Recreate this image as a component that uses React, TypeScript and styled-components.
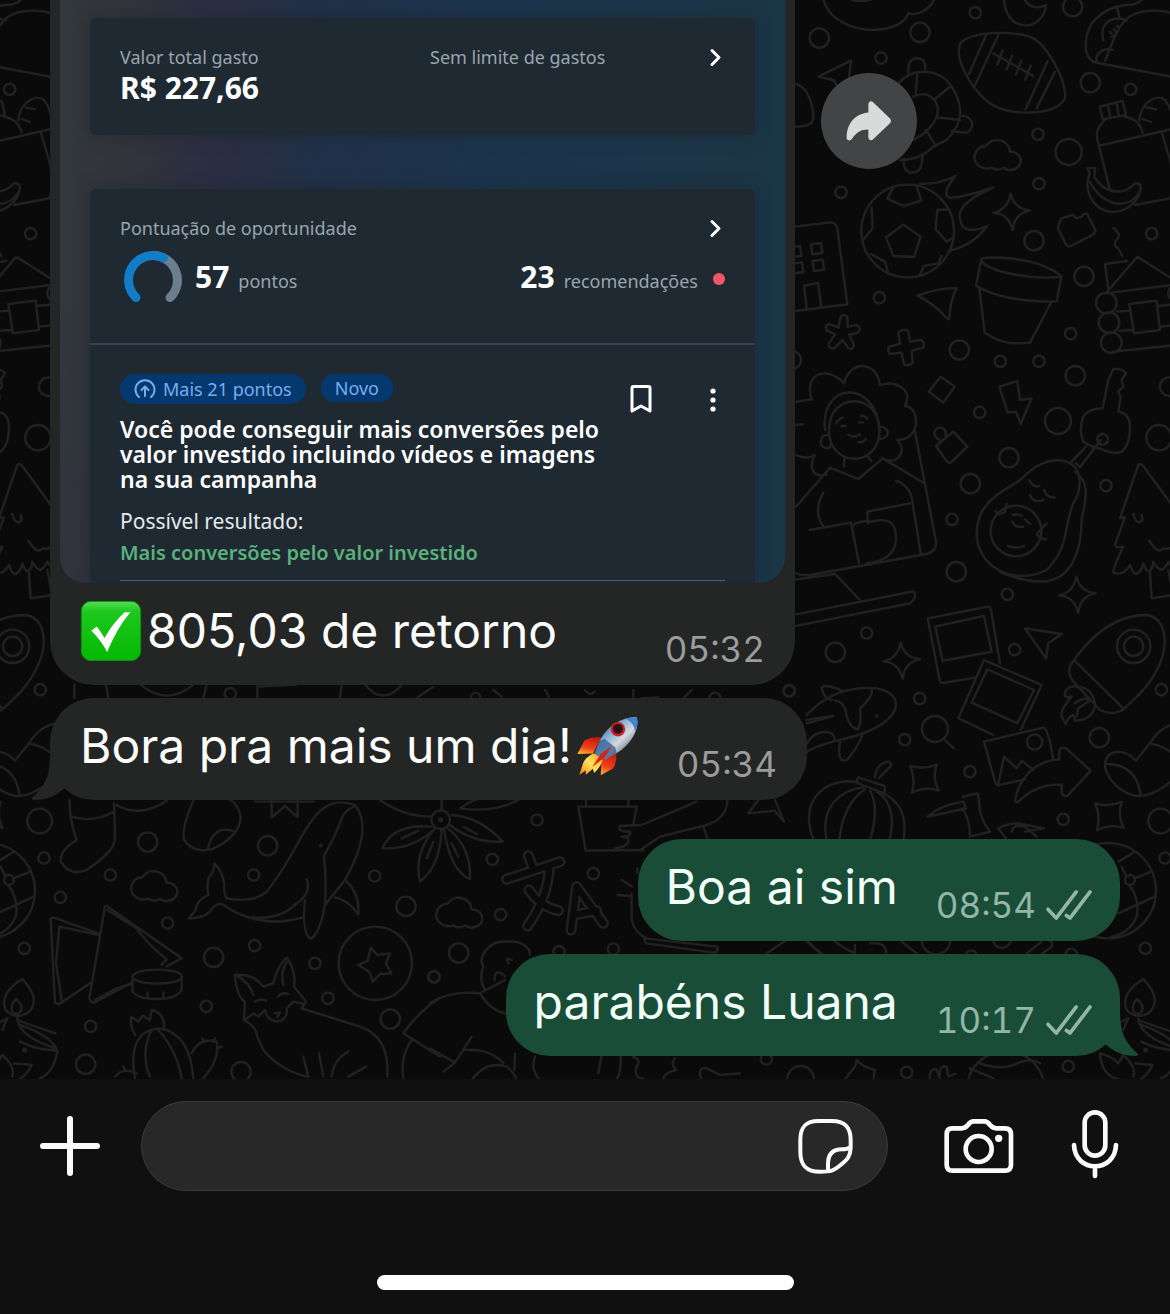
import { ReactNode } from "react";
import styled, { createGlobalStyle } from "styled-components";

const GlobalStyle = createGlobalStyle`
  *, *::before, *::after {
    box-sizing: border-box;
  }
  body {
    margin: 0;
    background-color: #101010;
    font-family: Inter, "Liberation Sans", sans-serif;
  }
  p, h2 {
    margin: 0;
  }
  button {
    padding: 0;
    border: 0;
    background: none;
    color: inherit;
    cursor: pointer;
  }
  svg {
    display: block;
    flex-shrink: 0;
  }
`;

const Screen = styled.div`
  display: flex;
  flex-direction: column;
  min-height: 100vh;
`;

/* chat */
const Chat = styled.main`
  position: relative;
  flex: 1;
  display: flex;
  flex-direction: column;
  justify-content: flex-end;
  gap: 13px;
  padding: 0 50px 23px;
  overflow: hidden;
  background-color: #0a0a0a;
`;
const WallpaperSvg = styled.svg`
  position: absolute;
  inset: 0;
  width: 100%;
  height: 100%;
`;
const MessageRow = styled.div<{ $mine?: boolean; $spaced?: boolean }>`
  position: relative;
  display: flex;
  align-items: flex-start;
  justify-content: ${({ $mine }) => ($mine ? "flex-end" : "flex-start")};
  gap: 26px;
  margin-top: ${({ $spaced }) => ($spaced ? "26px" : "0")};
`;
const Bubble = styled.div<{ $mine?: boolean }>`
  position: relative;
  border-radius: 44px;
  background-color: ${({ $mine }) => ($mine ? "#194d38" : "#242625")};
  color: ${({ $mine }) => ($mine ? "#f1fff8" : "#fdfdfd")};
`;
const PhotoBubble = styled(Bubble)`
  flex: 0 1 745px;
  border-radius: 0 0 44px 44px;
`;
const MessageBody = styled.div<{ $mine?: boolean }>`
  display: flex;
  align-items: flex-end;
  justify-content: space-between;
  gap: 38px;
  padding: ${({ $mine }) => ($mine ? "18px 28px 14px" : "18px 30px 14px")};
`;
const MessageText = styled.p`
  display: flex;
  align-items: center;
  gap: 5px;
  padding-bottom: 10px;
  font-size: 48px;
  line-height: 60px;

  & svg {
    height: 60px;
  }
`;
const MessageMeta = styled.div<{ $mine?: boolean }>`
  display: flex;
  align-items: center;
  gap: 10px;
  color: ${({ $mine }) => ($mine ? "#93b6a7" : "#9b9c9c")};
  font-size: 35px;
  line-height: 44px;
  font-variant-numeric: tabular-nums;
`;
const TailSvg = styled.svg<{ $mine?: boolean }>`
  position: absolute;
  bottom: 0;
  width: 50px;
  height: 60px;
  ${({ $mine }) => ($mine ? "right: -18px;" : "left: -18px; transform: scaleX(-1);")}
  fill: ${({ $mine }) => ($mine ? "#194d38" : "#242625")};
`;
const ForwardButton = styled.button`
  flex-shrink: 0;
  display: flex;
  align-items: center;
  justify-content: center;
  width: 96px;
  height: 96px;
  margin-top: 73px;
  border-radius: 50%;
  background-color: #434445;
`;

/* shared photo */
const Photo = styled.div`
  margin: 0 10px;
  padding: 18px 30px 0;
  border-radius: 0 0 26px 26px;
  background:
    linear-gradient(180deg, transparent 50%, rgba(46, 46, 66, 0.5) 100%) left / 60px 100% no-repeat,
    linear-gradient(90deg, #33383a 0, #32333c 70px, #2b2e42 150px, #203048 260px, #1b344c 420px, #1c3548 640px, #1b3646 100%);
  font-family: "Noto Sans", "Open Sans", sans-serif;
  overflow: hidden;
`;
const Card = styled.section`
  background-color: #1e2932;
  box-shadow: 0 0 16px rgba(28, 38, 46, 0.6);
`;
const SpendCard = styled(Card)`
  display: grid;
  grid-template-columns: 310px 1fr auto;
  padding: 27px 30px 28px;
  margin-bottom: 54px;
  border-radius: 6px;
`;
const ScoreCard = styled(Card)`
  border-radius: 6px 6px 0 0;
`;
const Label = styled.p`
  color: #9aa5ad;
  font-size: 18px;
  line-height: 24px;
`;
const Amount = styled.p`
  color: #fff;
  font-size: 30px;
  font-weight: 700;
  line-height: 38px;
`;
const ChevronButton = styled.button`
  height: 24px;
`;
const ScoreTop = styled.div`
  padding: 27px 30px 34px;
  border-bottom: 2px solid #334351;
`;
const ScoreHeader = styled.div`
  display: flex;
  justify-content: space-between;
  margin-bottom: 9px;
`;
const ScoreRow = styled.div`
  display: flex;
  align-items: center;
  height: 60px;
`;
const Figure = styled.p`
  display: flex;
  align-items: baseline;
  gap: 9px;
  margin-left: 9px;
  color: #9aa5ad;
  font-size: 18px;
  line-height: 40px;

  &:last-of-type {
    margin-left: auto;
  }
  & strong {
    color: #fff;
    font-size: 30px;
    font-weight: 700;
  }
`;
const RedDot = styled.span`
  width: 12px;
  height: 12px;
  margin-left: 15px;
  border-radius: 50%;
  background-color: #f25767;
`;
const Recommendation = styled.div`
  display: flex;
  justify-content: space-between;
  margin: 0 30px;
  padding: 29px 0 12px;
  border-bottom: 1px solid #50606d;
`;
const PhotoEnd = styled.div`
  height: 2px;
`;
const TagList = styled.div`
  display: flex;
  align-items: flex-start;
  gap: 15px;
  margin-bottom: 13px;
`;
const Tag = styled.span<{ $small?: boolean }>`
  display: flex;
  align-items: center;
  gap: 7px;
  height: ${({ $small }) => ($small ? "28px" : "30px")};
  padding: 0 14px;
  border-radius: 15px;
  background-color: #05386f;
  color: #75aeee;
  font-size: 18px;
`;
const Title = styled.h2`
  max-width: 495px;
  color: #fff;
  font-size: 23px;
  font-weight: 600;
  line-height: 25px;
`;
const Result = styled.p`
  margin-top: 14px;
  color: #e4e9ec;
  font-size: 21px;
  line-height: 31px;

  & strong {
    display: block;
    color: #5bb07b;
    font-size: 20px;
    font-weight: 600;
  }
`;
const CardActions = styled.div`
  display: flex;
  align-items: flex-start;
  gap: 48px;
  padding-top: 10px;
  color: #fff;
`;

/* composer */
const Composer = styled.footer`
  padding: 22px 0 24px;
  background-color: #101010;
  color: #fafafa;
`;
const ComposerBar = styled.form`
  display: flex;
  align-items: center;
  padding: 0 51px 0 40px;
`;
const InputBox = styled.div`
  flex: 1;
  display: flex;
  align-items: center;
  min-width: 0;
  height: 90px;
  margin: 0 56px 0 41px;
  padding: 0 34px 0 40px;
  border: 1px solid #3a3a3a;
  border-radius: 45px;
  background-color: #282828;
`;
const TextInput = styled.input`
  flex: 1;
  min-width: 0;
  border: 0;
  outline: 0;
  background: none;
  color: #fff;
  font: inherit;
  font-size: 48px;
`;
const ActionGroup = styled.div`
  display: flex;
  align-items: center;
  gap: 57px;
`;
const HomeIndicator = styled.div`
  width: 417px;
  max-width: 60%;
  height: 15px;
  margin: 84px auto 0;
  border-radius: 8px;
  background-color: #fff;
`;

type DoodlePatch = {
  x: number;
  y: number;
  circles: number[][];
  paths: string[];
};

const sparkle = (x: number, y: number) =>
  `M${x} ${y - 55} q10 43 58 50 q-46 8 -52 58 q-13 -50 -58 -52 q43 -8 52 -56z`;
const squareSparkle = (x: number, y: number) =>
  `M${x - 40} ${y - 40} q38 12 80 -4 q-13 38 6 78 q-38 -14 -80 6 q12 -42 -6 -80z`;
const cloud = (x: number, y: number) =>
  `M${x - 53} ${y + 35} c-30 -20 -15 -60 18 -62 c17 -28 67 -23 72 17 c40 0 45 50 2 55 q-12 2 -20 -7 q-22 12 -37 0 q-20 7 -35 -3z`;

// each patch is drawn at a third of its size, with its corner at x, y
const patches: DoodlePatch[] = [
  {
    x: 780,
    y: 0,
    circles: [
      [118, 114, 29], [303, 174, 17], [420, 97, 29], [586, 38, 17], [878, 20, 29], [931, 248, 29], [1052, 268, 17],
      [774, 403, 17], [866, 456, 39], [777, 551, 17], [183, 577, 17], [298, 893, 17], [762, 722, 29], [912, 829, 29],
      [1115, 701, 17], [538, 1050, 29], [661, 1084, 17], [777, 1084, 17], [872, 1001, 17], [886, 1127, 29],
      [35, 1080, 28], [383, 693, 139], [979, 909, 31], [987, 968, 31], [994, 1028, 31], [1190, 880, 25],
    ],
    paths: [
      "M128 -10C150 110 360 115 385 40C420 50 450 25 465 -5M205 -4Q240 10 280 -4",
      "M672 -10C670 100 790 100 798 15C770 30 740 20 730 -10",
      "M945 187C900 170 915 80 950 55Q985 20 1040 15Q1075 15 1090 -5M975 183C1010 100 1020 30 1120 32C1160 32 1190 40 1210 60M945 187L1185 232M1012 25L1018 50M970 120C955 60 1010 45 1040 62M950 182C945 160 975 140 998 150M990 95l4 6M1002 88l4 6M995 110l12 -4M1012 78l4 6",
      "M540 130C580 90 700 95 750 110C800 130 860 240 855 295C830 345 720 345 660 325C590 300 530 190 537 150ZM617 108L567 222M655 105L583 260M803 183L737 328M825 215L770 325M640 160L760 228M668 152l-16 42M696 167l-16 42M724 182l-16 42M752 197l-16 42",
      "M385 222L386 195C392 168 430 168 436 195L434 215M355 250C400 200 480 205 515 260C560 330 540 380 500 420L460 440Q420 480 360 480M400 290C450 265 485 310 470 350C455 390 420 410 400 420M412 222L407 280M508 262L465 297M472 352L540 360M437 390L463 430M540 348C575 345 590 380 560 398L515 394M372 475C368 510 385 520 398 518C425 515 425 495 428 470",
      "M170 255L160 240L115 230L213 182L207 235",
      "M46 252C80 255 100 310 100 355Q98 380 46 380",
      cloud(653, 465),
      "M370 674L422 710L402 771L340 768L318 712ZM340 562L322 596L372 618L424 602L410 560M275 622L278 685L250 720M505 628L472 630L467 688L500 725L518 715M273 762L315 785L325 822M485 768L475 790L432 798L418 828",
      "M420 552Q490 550 527 527Q480 585 510 593Q540 595 640 563Q530 610 540 655Q545 710 622 678Q580 735 510 752",
      sparkle(692, 637),
      "M840 665L845 655L880 645L888 655L905 650Q910 638 922 642L946 690Q946 700 938 705L872 738Q862 740 856 730L834 685Q834 675 840 665Z",
      "M1000 684Q1025 705 1013 715Q995 735 1015 745L1027 768",
      "M960 320L1028 303L1038 345L968 358ZM985 318l6 36M1010 308l6 38M975 358L958 380Q945 400 955 430L990 570M1035 350Q1080 360 1088 398M958 437L1185 385M1145 395L1170 480Q1190 560 1170 595L1065 615M1078 362C1080 310 1130 280 1155 300C1180 330 1180 370 1180 385M1100 322L1128 328M1088 357L1113 366",
      "M922 505L945 503L943 530C970 580 1030 590 1065 550Q1080 548 1083 560C1080 610 1030 640 990 635C930 625 910 560 930 520ZM930 545C960 610 1040 640 1080 575",
      "M46 680L150 667Q168 667 172 685L202 913L46 933M93 733l30 -4l4 30l-30 4zM98 783l30 -4l4 30l-30 4zM46 740l14 -2l4 30l-18 2M46 790l20 -2l4 28l-22 3M80 925L72 857L114 849L124 920",
      "M413 887Q480 862 530 865Q510 900 508 957Q505 960 498 952Q460 910 413 887Z",
      "M605 775C700 765 800 790 844 828L830 905C750 905 650 895 588 857ZM605 785C640 820 760 840 844 830M598 865L614 998C650 1025 700 1035 750 1028L812 910",
      "M182 950Q192 940 202 952L203 980L230 975Q246 985 235 997L208 1005L222 1035Q218 1052 205 1045L188 1020L162 1046Q145 1046 146 1032L165 1003L142 992Q132 980 145 972L175 982Z",
      "M355 997Q370 985 385 993L390 1025L425 1020Q435 1030 430 1043L395 1052L398 1088Q385 1100 372 1093L365 1058L330 1062Q320 1050 328 1040L360 1032Z",
      "M985 868L975 792L1042 783M1190 845L1072 770L978 880L1190 853M1010 935L1050 932M1018 992L1058 990M1135 918L1190 912M1140 980L1190 975M1000 1055L1190 1035M1048 912L1130 902L1140 990L1062 1000Z",
    ],
  },
  {
    x: 780,
    y: 380,
    circles: [
      [599, 97, 17], [834, 123, 39], [687, 233, 29], [571, 311, 29], [978, 317, 17], [516, 418, 17], [529, 575, 29],
      [682, 643, 17], [260, 759, 17], [166, 817, 29], [704, 809, 17], [419, 956, 17], [374, 1079, 17], [465, 1047, 39],
      [570, 1175, 17], [958, 1073, 29], [1144, 929, 17], [1137, 173, 38], [28, 932, 17], [1168, 20, 28], [968, 178, 16],
      [708, 453, 76], [764, 1086, 23], [1061, 799, 50], [1061, 799, 29], [290, 1008, 2],
    ],
    paths: [
      "M50 65Q75 60 95 58C70 -20 140 -45 192 10C210 -60 290 -60 300 15C350 0 400 30 375 78C420 80 425 180 352 180C380 210 360 250 315 240M48 135L68 133M48 225Q80 240 104 225C85 265 100 295 140 283",
      "M135 150C120 0 290 0 298 150M147 150C147 35 298 35 299 150C298 265 147 265 147 150M145 165C120 160 110 205 145 205Q155 200 152 190M298 140C330 140 335 175 295 178M168 130Q178 115 188 113M243 108Q255 105 262 117M185 138h12M237 127h12M205 165Q225 175 240 163M235 187Q252 187 258 177",
      "M193 235L192 260M265 232L275 243M48 380L150 263L235 297L308 235L430 308M130 338C110 370 108 410 130 440M90 450L213 428L237 550M348 302Q395 320 398 370L422 520M264 430L262 395L390 370M220 435Q240 420 270 425C330 410 350 430 348 480Q345 540 260 550",
      "M405 155L468 485Q470 515 440 522L90 585Q60 587 48 580M48 598L165 582L240 660M48 703L400 634Q415 650 390 670L48 738",
      "M482 -10L524 20L490 68L446 35Z",
      "M658 20L712 3L720 60L755 55L722 132L708 95L683 98Z",
      "M468 198L520 155L562 200L512 248Q505 250 500 243ZM480 180C450 165 465 140 485 143Q500 150 497 168",
      "M985 0L968 85Q925 85 910 110Q895 150 910 185Q930 200 965 207Q1000 225 1025 215Q1050 195 1050 140Q1050 100 1015 95L1022 50L1015 35L1030 20L1025 0L1038 -20Q1030 -35 1000 -33ZM918 200L870 250M962 180L900 262L888 250",
      "M590 460C590 360 680 330 720 300C760 260 800 235 850 242C920 260 900 340 880 370C850 440 870 500 800 570C700 620 590 560 590 460M885 275C935 310 915 360 905 420C905 520 870 600 790 605Q720 605 660 575",
      "M748 300Q760 325 778 318M793 330Q800 355 823 352M750 345Q760 370 790 360M698 405Q715 400 725 408M735 418L750 432M697 425Q705 445 730 440M683 497Q705 508 732 498M647 393Q655 410 675 395L680 372M800 430Q775 455 770 465Q785 478 798 478",
      "M1190 395L1090 258Q1082 248 1075 255L1020 415L1035 412Q1010 480 1005 495Q1010 505 1030 500Q1000 560 1000 578Q1030 590 1050 555Q1060 585 1070 582Q1085 575 1090 550Q1100 580 1110 572Q1120 560 1120 545Q1130 565 1145 570Q1160 560 1165 545Q1180 570 1190 560M1060 402Q1070 440 1088 420L1085 405M1108 482Q1135 525 1150 505Q1175 510 1180 495M1110 578L1115 655L1180 645L1165 570",
      sparkle(889, 645),
      sparkle(362, 843),
      squareSparkle(430, 1198),
      "M492 1077L520 1105",
      "M660 850L633 690Q630 680 625 680L443 715L480 905Q485 910 495 908L585 893M466 740L612 708L635 815L488 843ZM722 1050L785 915L612 840L535 1015L640 1065M622 868L762 930L712 1030L575 968Z",
      "M735 745L845 762L805 790L798 835Z",
      "M820 1140Q805 1045 790 1043L612 1085L645 1205Q650 1220 660 1215L735 1198M655 1213L672 1130L710 1165L725 1142L760 1170",
      "M705 1262C720 1180 780 1140 838 1138L838 1110Q845 1100 858 1105L932 1172L862 1248Q850 1250 845 1240L845 1215C800 1210 750 1230 718 1263Q708 1270 705 1262",
      "M882 840C940 760 1010 705 1100 705C1160 715 1165 790 1140 850C1110 920 1070 950 1032 987Q1000 1010 960 990L880 905Q855 870 882 840L1032 987M895 920Q860 915 855 940Q850 955 875 950Q840 990 845 1010L857 1032Q865 1010 880 1005L885 1022Q940 1020 945 975Q940 925 895 920M885 970Q920 945 925 965L895 985L890 1010",
      "M975 1160C970 1110 1030 1100 1068 1142L1110 1090Q1140 1040 1190 1030M975 1152Q1070 1150 1082 1248M975 1160C985 1210 1040 1250 1082 1248Q1130 1245 1190 1190M1108 1090Q1150 1095 1190 1130",
      "M80 1005C150 930 230 920 290 925C350 935 360 975 335 1005C300 1055 200 1075 160 1085Q100 1100 75 1120M190 935Q140 910 125 922Q130 955 155 960M165 962Q195 965 200 1010Q215 1050 235 1048Q245 1020 240 985Q280 950 275 930M80 1020L160 1008L80 1030M80 1090Q110 1045 155 1060Q165 1070 163 1082M180 1085Q170 1150 200 1140Q230 1110 248 1062",
      "M100 1380C50 1240 160 1190 235 1208M140 1380C120 1280 180 1230 250 1222M178 1380Q190 1270 255 1228M270 1380Q300 1280 270 1232M328 1380C350 1300 320 1250 290 1236M370 1380C385 1300 350 1260 310 1240M235 1192L312 1218Q318 1225 312 1240L235 1210Q228 1200 235 1192M285 1192Q290 1150 325 1145Q340 1150 330 1160L297 1195",
    ],
  },
  {
    x: 780,
    y: 800,
    circles: [
      [850, 58, 17], [1142, 63, 37], [1155, 174, 17], [1096, 445, 17], [865, 799, 17], [380, 817, 17], [62, 838, 40],
      [574, 468, 17], [874, 463, 17], [1097, 750, 4], [985, 272, 143], [1050, 240, 15], [677, 870, 117], [468, 420, 43],
      [666, 417, 27],
    ],
    paths: [
      squareSparkle(985, 50),
      "M443 50Q480 15 550 5L558 25ZM548 -10L593 -20L597 0Q595 50 630 95L570 110Q570 60 548 25",
      "M680 118L655 85Q680 70 715 70L792 85L735 95M770 110L735 80Q700 70 695 95",
      "M1015 185L1065 155M1040 230L1025 200M1063 235L1115 215M1050 258Q1080 300 1070 350Q1050 400 990 412M1015 340L1125 290",
      "M1090 537Q1150 600 1105 640Q1070 660 1040 630Q1020 580 1090 537M1072 597Q1100 625 1080 640Q1060 645 1058 625Q1060 605 1072 597M1075 655Q1080 710 1190 745M1075 660Q1100 670 1190 700M1025 665L1045 655L1030 690",
      "M960 760Q965 830 1020 838M960 760Q1000 770 1015 790L1030 765Q1070 800 1060 830M1065 790L1118 795Q1100 830 1080 838",
      "M570 805L640 835M600 790Q660 810 700 795Q750 770 780 790",
      "M195 838L225 800L230 780Q245 800 285 810L280 838M450 838Q445 805 470 808L480 838Q475 795 500 800L505 830L525 822",
      "M80 425L125 460M165 425Q200 450 225 460L225 435M270 430Q320 425 318 460M365 425L410 460M740 460L785 425M785 462L815 440Q820 425 810 424",
    ],
  },
  {
    x: 430,
    y: 690,
    circles: [
      [32, 389, 28], [32, 389, 4], [321, 390, 17], [187, 508, 17], [490, 551, 17], [212, 674, 17], [86, 789, 29],
      [12, 860, 17], [387, 785, 17], [550, 777, 17], [1009, 1107, 17], [137, 22, 14], [855, 25, 17], [1077, 3, 17],
    ],
    paths: [
      "M35 330V360M90 355Q160 300 265 330Q190 370 90 355M65 375Q150 380 218 455Q130 460 60 405M50 412Q125 470 120 568Q60 540 42 418M5 380Q-80 380 -150 330M5 410Q-110 400 -143 475Q-60 480 5 425M15 415Q-50 490 -30 575Q30 530 35 418M103 412L140 432M65 460L85 500M-85 445L-35 422M-10 505L10 455",
      "M610 405L620 350H445L467 482L640 480M468 330V350M595 330V350M555 475Q600 470 595 445L575 440Q605 440 600 425Q560 425 570 408L635 405L800 335M630 480L690 440L820 408Q890 390 893 330M820 408L832 445",
      "M985 330L955 370L1035 362L1062 395L1035 330",
      cloud(88, 668),
      "M605 610V690Q615 730 650 745M575 570L607 590M563 615L600 618M622 535V550M645 745L860 770Q870 785 850 788L650 760Q640 750 645 745M1010 790L1070 750M1130 750L1170 790",
      "M165 900Q145 870 160 830C140 800 180 750 230 755C270 750 300 770 300 795M225 860L215 850Q190 840 195 870M235 820Q225 800 245 810M225 870L150 910Q180 960 225 970M0 940Q60 900 150 910",
      "M0 1075L75 1118L125 1040M40 1145L75 1118M105 1080Q180 1075 220 1120M125 1170Q170 1110 230 1130Q255 1150 260 1170M255 1090L253 1140M315 1100Q300 1140 330 1170M515 1095L505 1150M572 1100Q575 1140 560 1170M610 1100Q635 1110 620 1130Q610 1165 640 1165M735 1105Q720 1120 738 1140Q700 1150 700 1168M815 1170Q800 1130 830 1135L870 1155L930 1150",
      "M190 0L215 20M345 0Q360 20 355 25M465 0Q480 20 495 5M610 0V22M635 25L685 22M760 25L785 0",
    ],
  },
  {
    x: 20,
    y: 680,
    circles: [
      [631, 41, 17], [383, 486, 29], [271, 585, 17], [121, 652, 17], [743, 497, 29], [701, 585, 17], [443, 729, 17],
      [581, 832, 29], [704, 797, 17], [885, 850, 17], [924, 955, 17], [559, 979, 17], [212, 1039, 17], [197, 1153, 29],
      [663, 1175, 29], [1064, 588, 17], [1158, 679, 29], [1242, 891, 17], [1111, 1017, 29], [903, 497, 2],
      [1066, 850, 110],
    ],
    paths: [
      "M148 360Q150 430 170 480Q120 510 122 545Q150 590 200 570Q290 510 285 470L282 370M155 410Q220 430 280 395M290 375Q360 415 440 362",
      "M520 362Q485 440 492 480Q520 520 575 508Q660 470 662 410Q655 370 630 360M563 508Q580 430 645 455",
      "M755 360V412L795 378L833 412V360M705 365H880",
      "M620 655Q700 670 740 635C820 540 850 430 910 385Q950 355 1005 375C1050 430 1020 520 975 600L915 675M1005 378Q970 390 960 430Q940 480 912 528Q920 600 915 675Q900 760 872 777Q845 760 855 660M860 598Q875 640 830 670Q780 720 700 712M620 655Q610 640 613 610Q605 570 583 550Q585 570 565 595Q560 620 565 645Q530 660 527 690L507 715Q550 715 570 695Q585 670 605 672Q720 750 850 712M975 600Q1020 640 1015 703Q985 660 945 652",
      cloud(403, 618),
      "M235 760L100 712L92 715L105 970L118 972L210 910M235 765L118 740L108 850L125 960M440 860L485 835L270 685Q262 675 255 680L208 955Q212 970 225 967L335 908M262 690L350 745Q380 790 440 838L425 855M225 960L290 925L335 912",
      "M338 890C340 862 485 862 486 890C485 918 340 918 338 890L337 935Q355 958 412 957Q470 957 485 930V890M383 937v16M430 937v16",
      "M1052 803L1072 825L1110 820L1098 850L1114 880L1080 882L1058 905L1048 875L1015 855L1043 843Z",
      "M645 885Q700 880 730 920L760 910Q775 850 802 833Q830 880 822 920L858 965L845 985L1020 1040Q1110 1070 1102 1190M645 885Q650 950 675 965L672 1020Q710 1040 712 1070L730 1110Q780 1170 860 1190M675 1020L700 1000L715 1010L735 990Q740 1020 770 1025Q805 1020 800 985L820 965L850 972M705 965Q720 955 738 962M775 950Q785 935 803 942M765 1000L780 998L772 1012M790 915Q780 880 800 845M700 945Q690 910 655 890M850 1130L865 1190M897 1120L910 1190M935 1190Q940 1140 985 1115M985 1190L1038 1160",
      "M1260 955Q1200 990 1150 1060L1260 1130M1175 1080Q1140 1130 1150 1195",
      "M345 1195Q320 1050 420 1045Q510 1060 520 1195M395 1050Q360 1120 390 1190M415 1050Q470 1110 485 1195M345 1065Q330 1040 333 1010L355 1025L368 1007L390 1020L395 990Q435 1000 432 1045M515 1120Q540 1070 590 1085Q600 1140 550 1195M547 1075l6 10M585 1075l-5 10M605 1100l-12 4M285 1190Q310 1160 350 1180M310 1160l8 14",
      "M0 1035Q100 1070 112 1115Q100 1180 60 1195M0 1085Q50 1110 112 1112",
      "M163 14V54M258 14L265 54M362 14Q440 80 520 14M550 54L560 14M712 54V14M712 20L830 14M965 14L960 54M1035 14Q1090 80 1145 14M1190 54L1240 20",
    ],
  },
];

const TILE_WIDTH = 1121;
const translateGlyphs = "M230 568L390 515M295 497L307 530M358 530Q355 620 293 708M297 600Q330 650 385 662M423 720L440 590L520 700M435 675L500 662";

function Doodles() {
  return (
    <g fill="none" stroke="#212121" strokeWidth="7" strokeLinecap="round" strokeLinejoin="round">
      {patches.map((patch) => (
        <g key={`${patch.x}-${patch.y}`} transform={`translate(${patch.x} ${patch.y}) scale(0.3333)`}>
          {patch.circles.map(([cx, cy, r]) => (
            <circle key={`${cx}-${cy}-${r}`} cx={cx} cy={cy} r={r} />
          ))}
          <path d={patch.paths.join("")} />
        </g>
      ))}
      <g transform="translate(430 690) scale(0.3333)">
        <path d={translateGlyphs} strokeWidth="33" />
        <path d={translateGlyphs} stroke="#0a0a0a" strokeWidth="19" />
      </g>
    </g>
  );
}

function Wallpaper() {
  return (
    <WallpaperSvg aria-hidden="true">
      <defs>
        <pattern id="doodles" width={TILE_WIDTH} height="1090" patternUnits="userSpaceOnUse">
          <Doodles />
          <g transform={`translate(${-TILE_WIDTH} 0)`}>
            <Doodles />
          </g>
        </pattern>
      </defs>
      <rect width="100%" height="100%" fill="url(#doodles)" />
    </WallpaperSvg>
  );
}

function CheckEmoji() {
  return (
    <svg width="62" height="60" viewBox="93 747 186 186" role="img" aria-label="✅">
      <defs>
        <linearGradient id="checkFill" x1="0" y1="0" x2="0" y2="1">
          <stop offset="0" stopColor="#55dd55" />
          <stop offset="0.18" stopColor="#1cc81c" />
          <stop offset="1" stopColor="#05b805" />
        </linearGradient>
      </defs>
      <rect x="94" y="748" width="184" height="184" rx="30" fill="url(#checkFill)" stroke="#0c8f12" strokeWidth="3" />
      <path d="M125 839L142 826Q155 843 166 862Q190 818 228 782H246Q205 830 174 905Q155 868 125 839Z" fill="#fff" />
    </svg>
  );
}

function RocketEmoji() {
  return (
    <svg width="62" height="60" viewBox="436 75 188 182" role="img" aria-label="🚀">
      <defs>
        <linearGradient id="rocketBody" x1="0.2" y1="0.2" x2="0.75" y2="0.8">
          <stop offset="0" stopColor="#3d6fa8" />
          <stop offset="0.35" stopColor="#8fb4d6" />
          <stop offset="0.65" stopColor="#d5dade" />
          <stop offset="1" stopColor="#6d7f8e" />
        </linearGradient>
        <linearGradient id="rocketFin" x1="0.5" y1="0" x2="0.2" y2="1">
          <stop offset="0" stopColor="#c81a12" />
          <stop offset="0.6" stopColor="#f2401b" />
          <stop offset="1" stopColor="#ffb02e" />
        </linearGradient>
        <linearGradient id="rocketFlame" x1="1" y1="0" x2="0" y2="1">
          <stop offset="0" stopColor="#ff9d1c" />
          <stop offset="0.5" stopColor="#ffe45c" />
          <stop offset="1" stopColor="#f57a12" />
        </linearGradient>
      </defs>
      <path d="M510 140Q475 138 458 150L437 190L484 189Z" fill="url(#rocketFin)" />
      <path d="M556 186Q556 220 545 234L508 255L510 210Z" fill="url(#rocketFin)" />
      <path d="M487 188Q460 200 453 222L443 254L462 240L463 253L484 235L488 248Q512 225 514 204Z" fill="url(#rocketFlame)" />
      <path d="M617 78C627 116 598 160 562 184L520 207L490 188L505 150C525 108 570 78 617 78Z" fill="url(#rocketBody)" />
      <path d="M617 78C622 96 619 110 612 122Q610 95 583 83Q600 78 617 78Z" fill="#3e86cf" />
      <path d="M505 150L520 145L552 170L556 188L520 207L490 188Z" fill="#2f6094" opacity="0.75" />
      <path d="M482 230L508 190L542 166L520 200Z" fill="#d3221a" />
      <circle cx="560" cy="115" r="22" fill="#c9202a" />
      <circle cx="560" cy="114" r="15" fill="#2a1114" />
    </svg>
  );
}

function ReadChecks() {
  return (
    <svg width="46" height="32" viewBox="799 262 140 96" fill="none" stroke="currentColor" strokeWidth="11" strokeLinecap="round" strokeLinejoin="round" role="img" aria-label="Entregue">
      <path d="M805 323L830 350L891 270M861 342L872 350L933 270" />
    </svg>
  );
}

function Tail({ mine }: { mine?: boolean }) {
  return (
    <TailSvg $mine={mine} viewBox="0 0 50 60" aria-hidden="true">
      <path d="M32 4C32 30 32 42 50 58Q50 60 48 60C38 60 28 57 21 51L14 46V4Z" />
    </TailSvg>
  );
}

type MessageProps = {
  time: string;
  mine?: boolean;
  tail?: boolean;
  spaced?: boolean;
  children: ReactNode;
};

function Message({ time, mine, tail, spaced, children }: MessageProps) {
  return (
    <MessageRow $mine={mine} $spaced={spaced}>
      <Bubble $mine={mine}>
        {tail && <Tail mine={mine} />}
        <MessageBody $mine={mine}>
          <MessageText>{children}</MessageText>
          <MessageMeta $mine={mine}>
            <time>{time}</time>
            {mine && <ReadChecks />}
          </MessageMeta>
        </MessageBody>
      </Bubble>
    </MessageRow>
  );
}

function Chevron({ label }: { label: string }) {
  return (
    <ChevronButton type="button" aria-label={label}>
      <svg width="20" height="24" viewBox="0 0 20 24" fill="none" stroke="#fff" strokeWidth="3" strokeLinecap="round" strokeLinejoin="round">
        <path d="M7 5.5L14 12.5L7 19.5" />
      </svg>
    </ChevronButton>
  );
}

function AdsPhoto() {
  return (
    <Photo>
      <SpendCard>
        <div>
          <Label>Valor total gasto</Label>
          <Amount>R$ 227,66</Amount>
        </div>
        <Label>Sem limite de gastos</Label>
        <Chevron label="Ver gastos" />
      </SpendCard>
      <ScoreCard>
        <ScoreTop>
          <ScoreHeader>
            <Label>Pontuação de oportunidade</Label>
            <Chevron label="Ver pontuação" />
          </ScoreHeader>
          <ScoreRow>
            <svg width="66" height="60" viewBox="0 0 66 60" fill="none" strokeWidth="9" strokeLinecap="round" aria-hidden="true">
              <path d="M33 6.5A24.5 24.5 0 0 1 50 48.6" stroke="#6c7d8d" />
              <path d="M16 48.6A24.5 24.5 0 0 1 43.4 8.8" stroke="#127cc7" />
            </svg>
            <Figure>
              <strong>57</strong> pontos
            </Figure>
            <Figure>
              <strong>23</strong> recomendações
            </Figure>
            <RedDot />
          </ScoreRow>
        </ScoreTop>
        <Recommendation>
          <div>
            <TagList>
              <Tag>
                <svg width="22" height="20" viewBox="0 0 22 20" fill="none" stroke="currentColor" strokeWidth="2" strokeLinecap="round" strokeLinejoin="round" aria-hidden="true">
                  <path d="M5 18A9.5 9.5 0 1 1 17 18M11 17V8M7.5 11L11 7.5L14.5 11" />
                </svg>
                Mais 21 pontos
              </Tag>
              <Tag $small>Novo</Tag>
            </TagList>
            <Title>Você pode conseguir mais conversões pelo valor investido incluindo vídeos e imagens na sua campanha</Title>
            <Result>
              Possível resultado:
              <strong>Mais conversões pelo valor investido</strong>
            </Result>
          </div>
          <CardActions>
            <button type="button" aria-label="Salvar">
              <svg width="24" height="30" viewBox="0 0 24 30" fill="none" stroke="currentColor" strokeWidth="3" strokeLinejoin="round">
                <path d="M3 4Q3 2.5 4.5 2.5H19.5Q21 2.5 21 4V27L12 22L3 27Z" />
              </svg>
            </button>
            <button type="button" aria-label="Mais opções">
              <svg width="24" height="30" viewBox="0 0 24 30" fill="currentColor">
                <circle cx="12" cy="7" r="2.6" />
                <circle cx="12" cy="16" r="2.6" />
                <circle cx="12" cy="25" r="2.6" />
              </svg>
            </button>
          </CardActions>
        </Recommendation>
        <PhotoEnd />
      </ScoreCard>
    </Photo>
  );
}

function App() {
  return (
    <>
      <GlobalStyle />
      <Screen>
        <Chat>
          <Wallpaper />
          <MessageRow>
            <PhotoBubble>
              <AdsPhoto />
              <MessageBody>
                <MessageText>
                  <CheckEmoji />
                  805,03 de retorno
                </MessageText>
                <MessageMeta>
                  <time>05:32</time>
                </MessageMeta>
              </MessageBody>
            </PhotoBubble>
            <ForwardButton type="button" aria-label="Encaminhar">
              <svg width="46" height="40" viewBox="197 299 138 122" fill="#d9dada">
                <path d="M264 308Q266 296 277 301L330 352Q336 360 330 367L277 417Q266 422 264 411V386C240 386 226 396 214 415Q205 424 198 415C196 372 220 338 264 334Z" />
              </svg>
            </ForwardButton>
          </MessageRow>
          <Message time="05:34" tail>
            Bora pra mais um dia!
            <RocketEmoji />
          </Message>
          <Message time="08:54" mine spaced>
            Boa ai sim
          </Message>
          <Message time="10:17" mine tail>
            parabéns Luana
          </Message>
        </Chat>
        <Composer>
          <ComposerBar onSubmit={(e) => e.preventDefault()}>
            <button type="button" aria-label="Anexar">
              <svg width="60" height="60" viewBox="0 0 60 60" fill="none" stroke="currentColor" strokeWidth="6" strokeLinecap="round">
                <path d="M3 30H57M30 3V57" />
              </svg>
            </button>
            <InputBox>
              <TextInput type="text" aria-label="Mensagem" />
              <button type="button" aria-label="Figurinhas">
                <svg width="55" height="55" viewBox="114 117 165 165" fill="none" stroke="currentColor" strokeWidth="12" strokeLinecap="round" strokeLinejoin="round">
                  <path d="M121 180C121 140 137 123 175 123H215C254 123 272 140 272 180V205C270 230 262 238 248 250Q230 266 217 271Q205 275 180 275C138 275 121 256 121 215ZM204 272V252C204 222 220 208 246 208Q262 208 270 202" />
                </svg>
              </button>
            </InputBox>
            <ActionGroup>
              <button type="button" aria-label="Câmera">
                <svg width="70" height="54" viewBox="551 117 210 162" fill="none" stroke="currentColor" strokeWidth="14" strokeLinejoin="round">
                  <path d="M576 145H604C613 145 617 142 622 136Q630 124 640 124H672Q682 124 690 136C695 142 699 145 708 145H734Q752 145 752 163V254Q752 272 734 272H577Q559 272 559 254V163Q559 145 576 145Z" />
                  <circle cx="655" cy="207" r="39" />
                  <circle cx="715" cy="175" r="11" fill="currentColor" stroke="none" />
                </svg>
              </button>
              <button type="button" aria-label="Gravar áudio">
                <svg width="48" height="72" viewBox="933 90 144 216" fill="none" stroke="currentColor" strokeWidth="14" strokeLinecap="round">
                  <rect x="974" y="97" width="62" height="130" rx="31" />
                  <path d="M942 195C945 280 1065 280 1068 195M1005 260V288" />
                </svg>
              </button>
            </ActionGroup>
          </ComposerBar>
          <HomeIndicator />
        </Composer>
      </Screen>
    </>
  );
}

export default App;
